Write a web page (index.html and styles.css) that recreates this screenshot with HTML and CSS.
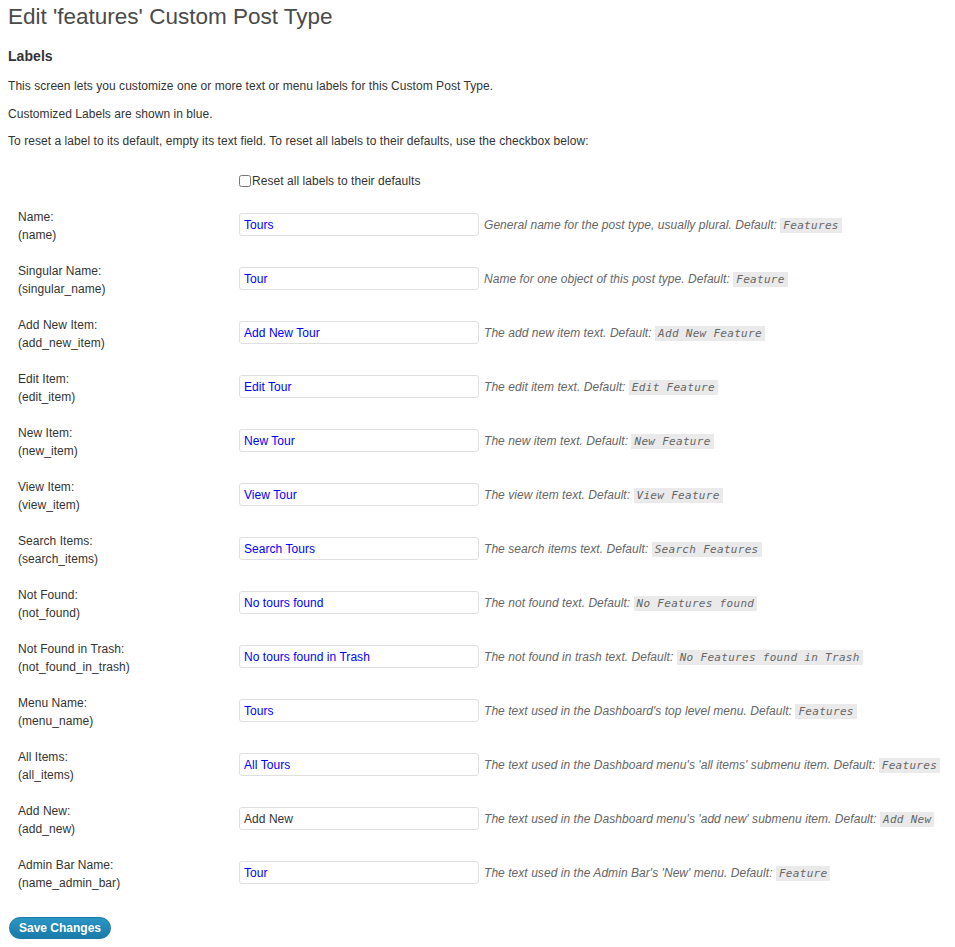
FILE: index.html
```html
<!DOCTYPE html>
<html>
<head>
<meta charset="utf-8">
<link rel="stylesheet" href="styles.css">
</head>
<body>
<div class="wrap">
  <h2 class="title">Edit 'features' Custom Post Type</h2>
  <h3 class="section">Labels</h3>
  <p>This screen lets you customize one or more text or menu labels for this Custom Post Type.</p>
  <p>Customized Labels are shown in blue.</p>
  <p>To reset a label to its default, empty its text field. To reset all labels to their defaults, use the checkbox below:</p>

  <div class="form">
    <div class="row reset-row">
      <div class="label"></div>
      <label class="check"><input type="checkbox"><span>Reset all labels to their defaults</span></label>
    </div>

    <div class="row">
      <div class="label">Name:<br>(name)</div>
      <input class="field custom" type="text" value="Tours">
      <div class="desc">General name for the post type, usually plural. Default: <code>Features</code></div>
    </div>
    <div class="row">
      <div class="label">Singular Name:<br>(singular_name)</div>
      <input class="field custom" type="text" value="Tour">
      <div class="desc">Name for one object of this post type. Default: <code>Feature</code></div>
    </div>
    <div class="row">
      <div class="label">Add New Item:<br>(add_new_item)</div>
      <input class="field custom" type="text" value="Add New Tour">
      <div class="desc">The add new item text. Default: <code>Add New Feature</code></div>
    </div>
    <div class="row">
      <div class="label">Edit Item:<br>(edit_item)</div>
      <input class="field custom" type="text" value="Edit Tour">
      <div class="desc">The edit item text. Default: <code>Edit Feature</code></div>
    </div>
    <div class="row">
      <div class="label">New Item:<br>(new_item)</div>
      <input class="field custom" type="text" value="New Tour">
      <div class="desc">The new item text. Default: <code>New Feature</code></div>
    </div>
    <div class="row">
      <div class="label">View Item:<br>(view_item)</div>
      <input class="field custom" type="text" value="View Tour">
      <div class="desc">The view item text. Default: <code>View Feature</code></div>
    </div>
    <div class="row">
      <div class="label">Search Items:<br>(search_items)</div>
      <input class="field custom" type="text" value="Search Tours">
      <div class="desc">The search items text. Default: <code>Search Features</code></div>
    </div>
    <div class="row">
      <div class="label">Not Found:<br>(not_found)</div>
      <input class="field custom" type="text" value="No tours found">
      <div class="desc">The not found text. Default: <code>No Features found</code></div>
    </div>
    <div class="row">
      <div class="label">Not Found in Trash:<br>(not_found_in_trash)</div>
      <input class="field custom" type="text" value="No tours found in Trash">
      <div class="desc">The not found in trash text. Default: <code>No Features found in Trash</code></div>
    </div>
    <div class="row">
      <div class="label">Menu Name:<br>(menu_name)</div>
      <input class="field custom" type="text" value="Tours">
      <div class="desc">The text used in the Dashboard's top level menu. Default: <code>Features</code></div>
    </div>
    <div class="row">
      <div class="label">All Items:<br>(all_items)</div>
      <input class="field custom" type="text" value="All Tours">
      <div class="desc">The text used in the Dashboard menu's 'all items' submenu item. Default: <code>Features</code></div>
    </div>
    <div class="row">
      <div class="label">Add New:<br>(add_new)</div>
      <input class="field" type="text" value="Add New">
      <div class="desc">The text used in the Dashboard menu's 'add new' submenu item. Default: <code>Add New</code></div>
    </div>
    <div class="row">
      <div class="label">Admin Bar Name:<br>(name_admin_bar)</div>
      <input class="field custom" type="text" value="Tour">
      <div class="desc">The text used in the Admin Bar's 'New' menu. Default: <code>Feature</code></div>
    </div>
  </div>

  <div class="submit">
    <button class="button-primary" type="button">Save Changes</button>
  </div>
</div>
</body>
</html>
```

FILE: styles.css
```css
html, body {
  margin: 0;
  padding: 0;
  background: #fff;
}
body {
  font-family: "Liberation Sans", Arial, sans-serif;
  font-size: 12px;
  color: #333;
  letter-spacing: 0.05px;
}
.wrap {
  padding: 0 8px;
  overflow: hidden;
}
.title {
  font-family: "Liberation Sans", Arial, sans-serif;
  font-weight: normal;
  font-size: 22.5px;
  line-height: 29px;
  color: #4a4a4a;
  margin: 2px 0 0 0;
  padding: 0;
  letter-spacing: 0;
}
.section {
  font-size: 14px;
  font-weight: bold;
  color: #333;
  margin: 15px 0 0 0;
  line-height: 20px;
}
p {
  margin: 11px 0 0 0;
  line-height: 16.5px;
}
.section + p {
  margin-top: 12px;
}
.form {
  margin-top: 14px;
}
.row {
  display: flex;
  align-items: center;
  height: 54px;
}
.reset-row {
  height: 34px;
}
.label {
  width: 221px;
  flex: none;
  padding-left: 10px;
  padding-top: 2px;
  line-height: 18px;
  color: #333;
}
.reset-row .label {
  padding-top: 0;
}
.check {
  display: flex;
  align-items: center;
  color: #333;
}
.check input {
  margin: 0 1px 0 0;
  width: 12px;
  height: 12px;
}
.field {
  box-sizing: border-box;
  width: 240px;
  height: 23px;
  flex: none;
  border: 1px solid #dfdfdf;
  border-radius: 3px;
  padding: 2px 4px;
  font-family: "Liberation Sans", Arial, sans-serif;
  font-size: 12px;
  letter-spacing: 0.05px;
  color: #333;
  background: #fff;
  margin: 0;
  outline: none;
}
.field.custom {
  color: #0000ff;
}
.desc {
  margin-left: 5px;
  font-style: italic;
  color: #666;
  white-space: nowrap;
}
code {
  font-family: "DejaVu Sans Mono", "Liberation Mono", monospace;
  font-size: 11px;
  font-style: italic;
  background: #eaeaea;
  color: #666;
  padding: 1px 3px;
  letter-spacing: 0.3px;
}
.submit {
  padding: 17px 0 0 1px;
}
.button-primary {
  font-family: "Liberation Sans", Arial, sans-serif;
  font-size: 12px;
  font-weight: bold;
  color: #fff;
  height: 22px;
  padding: 0 9px;
  border: 1px solid #1b7aa6;
  border-radius: 11px;
  background: linear-gradient(to bottom, #2a95c5, #1a7ba8);
  line-height: 20px;
  cursor: pointer;
}
```
